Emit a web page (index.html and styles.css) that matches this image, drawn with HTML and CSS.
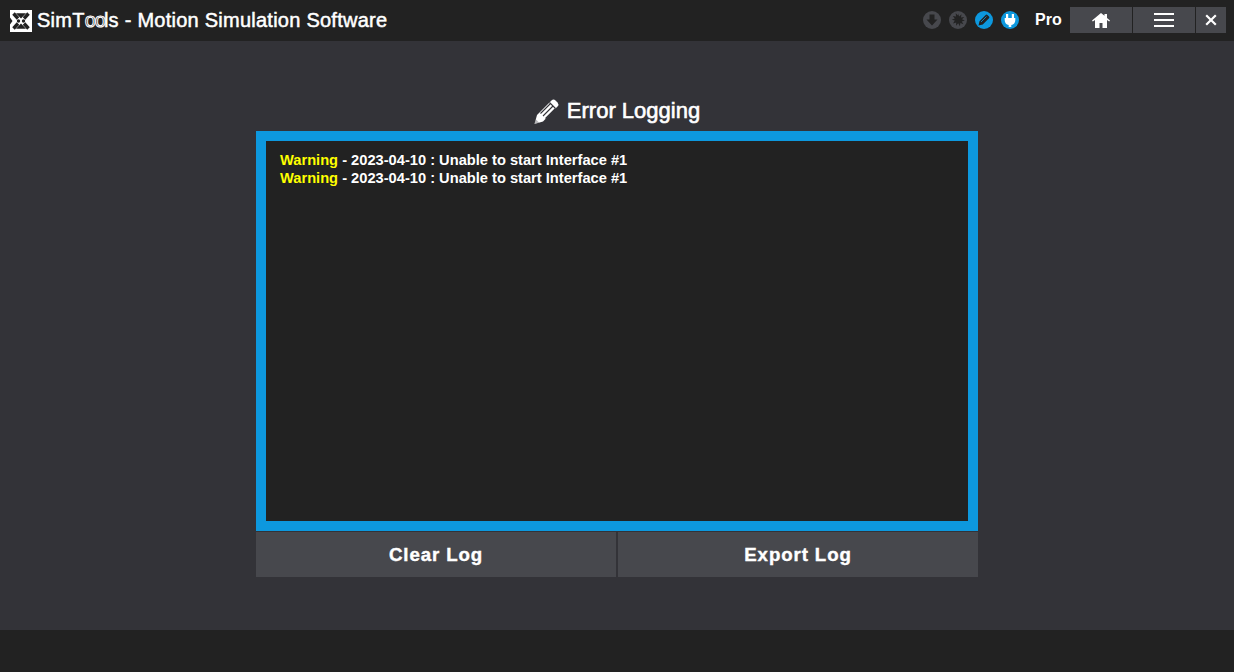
FILE: index.html
```html
<!DOCTYPE html>
<html lang="en">
<head>
<meta charset="utf-8">
<title>SimTools - Motion Simulation Software</title>
<link rel="stylesheet" href="styles.css">
</head>
<body>
<div class="app">
  <header class="topbar">
    <div class="brand">
      <svg class="logo" viewBox="0 0 22 22" width="22" height="22" aria-hidden="true">
        <rect width="22" height="22" fill="#fff"/>
        <path d="M3.500 3.500L8 8.500M18.500 3.500L14 8.500M3.500 18.500L8 13.500M18.500 18.500L14 13.500" stroke="#222" stroke-width="3.400"/>
        <path d="M6 3.200h10L11 8.500zM6 18.800h10L11 13.500z" fill="#222"/>
        <path d="M0 7.500L2.500 11 0 14.500z" fill="#222"/>
        <circle cx="8.500" cy="11" r="1.700" fill="#222"/>
        <circle cx="13.500" cy="11" r="1.700" fill="#222"/>
      </svg>
      <h1 class="brand-title">SimT<span class="gear-letters">oo</span>ls - Motion Simulation Software</h1>
    </div>
    <div class="top-right">
      <div class="status-icons">
        <span class="status status-off">
          <svg viewBox="0 0 18 18" width="18" height="18" aria-hidden="true"><path d="M6.500 3.500h5v5h3L9 14.500 3.500 8.500h3z" fill="#222"/></svg>
        </span>
        <span class="status status-off">
          <svg viewBox="0 0 18 18" width="18" height="18" aria-hidden="true"><path d="M9 2.500l1.200 3 2.300-2.200-.5 3.200 3.300-.6-2.300 2.400 2.800 1.300-3 .8 1.600 2.900-3-1.400-.5 3.300-1.700-2.900-2.200 2.400.2-3.300-3.200 1 1.800-2.800-3-.9 3-1.200-2-2.600 3.200.5-.3-3.200 2.400 2.300z" fill="#222"/></svg>
        </span>
        <span class="status status-on">
          <svg viewBox="0 0 18 18" width="18" height="18" aria-hidden="true"><path d="M3.500 14.500l1-4.300 6.200-6.200a1.200 1.200 0 0 1 1.700 0l1.600 1.600a1.200 1.200 0 0 1 0 1.700l-6.200 6.200z" fill="#222"/><path d="M6 11l5.500-5.500" stroke="#0d98de" stroke-width=".8"/></svg>
        </span>
        <span class="status status-on">
          <svg viewBox="0 0 18 18" width="18" height="18" aria-hidden="true"><path d="M5 3h2.200v4h3.600V3H13v4h1.300v2.300a5.200 5.200 0 0 1-4 4.800V16H7.700v-1.900a5.200 5.200 0 0 1-4-4.800V7H5z" fill="#fff"/></svg>
        </span>
      </div>
      <span class="edition">Pro</span>
      <nav class="top-nav">
        <button class="nav-btn nav-home" aria-label="Home">
          <svg viewBox="0 0 18 15" width="18" height="15" aria-hidden="true"><path d="M9 0L0 7.500l.8 1L3 7v8h4.500v-5h3v5H15V7l2.200 1.500.8-1L15 5V1h-2.500v1.800z" fill="#fff"/></svg>
        </button>
        <button class="nav-btn nav-menu" aria-label="Menu">
          <span class="bars"></span>
        </button>
        <button class="nav-btn nav-close" aria-label="Close">
          <svg viewBox="0 0 12 12" width="12" height="12" aria-hidden="true"><path d="M1.200 1.200L10.800 10.800M10.800 1.200L1.200 10.800" stroke="#fff" stroke-width="2.200"/></svg>
        </button>
      </nav>
    </div>
  </header>
  <main class="content">
    <h2 class="section-title">
      <svg viewBox="0 0 26 26" width="26" height="26" aria-hidden="true">
        <path d="M0.500 26l2.500-9L17.500 2.500a3 3 0 0 1 4 0l2 2a3 3 0 0 1 0 4L9 23.500z" fill="#fff"/>
        <path d="M6.500 15.500L16.500 5.500M9 18L19 8M11.500 20.500L21.500 10.500" stroke="#333338" stroke-width="1.100"/>
        <path d="M15.500 4.500l6 6" stroke="#333338" stroke-width="1.100"/>
        <path d="M0.500 26l1.300-4.700 3.400 3.400z" fill="#333338" opacity=".35"/>
      </svg>
      <span>Error Logging</span>
    </h2>
    <section class="log-panel">
      <div class="log-line"><span class="log-level">Warning</span> - 2023-04-10 : Unable to start Interface #1</div>
      <div class="log-line"><span class="log-level">Warning</span> - 2023-04-10 : Unable to start Interface #1</div>
    </section>
    <div class="log-actions">
      <button class="action-btn">Clear Log</button>
      <button class="action-btn">Export Log</button>
    </div>
  </main>
  <footer class="bottombar"></footer>
</div>
</body>
</html>
```
FILE: styles.css
```css
* { box-sizing: border-box; }
html, body { margin: 0; height: 100%; }
body { font-family: "Liberation Sans", Arial, sans-serif; background: #333338; color: #fff; overflow: hidden; }
.app { height: 672px; display: flex; flex-direction: column; }

.topbar { height: 41px; background: #222222; display: flex; justify-content: space-between; align-items: flex-start; padding: 0 8px 0 10px; }
.brand { display: flex; align-items: center; gap: 5px; height: 41px; }
.logo { flex: none; }
.brand-title { margin: 0; font-size: 20px; font-weight: 400; letter-spacing: 0.25px; -webkit-text-stroke: 0.5px #fff; white-space: nowrap; }
.gear-letters { color: #222; -webkit-text-stroke: 1px #fff; letter-spacing: -1px; margin-right: -1px; }

.top-right { display: flex; align-items: center; padding-top: 7px; }
.status-icons { display: flex; gap: 8px; margin-right: 16px; }
.status { width: 18px; height: 18px; border-radius: 50%; display: block; }
.status svg { display: block; }
.status-off { background: #47484d; }
.status-on { background: #0d98de; }
.edition { font-size: 16px; font-weight: 700; margin-right: 8px; width: 27px; }
.top-nav { display: flex; gap: 1px; }
.nav-btn { height: 26px; border: 0; padding: 0; background: #47484d; display: flex; align-items: center; justify-content: center; }
.nav-home, .nav-menu { width: 62px; }
.nav-close { width: 30px; }
.bars { width: 20px; height: 10px; border-top: 2px solid #fff; border-bottom: 2px solid #fff; display: block; box-sizing: content-box; }
.bars::after { content: ""; display: block; height: 2px; background: #fff; margin-top: 4px; }

.content { flex: 1; display: flex; flex-direction: column; align-items: center; padding-top: 52px; }
.section-title { margin: 0 0 3px; height: 35px; display: flex; align-items: center; gap: 7px; font-size: 22px; font-weight: 400; -webkit-text-stroke: 0.6px #fff; }
.log-panel { width: 722px; height: 400px; border: 10px solid #0d98de; background: #222222; padding: 10px 14px; font-size: 14.67px; font-weight: 700; line-height: 18px; }
.log-level { color: #ffff00; }
.log-actions { width: 722px; margin-top: 1px; display: flex; gap: 2px; }
.action-btn { flex: 1; height: 45px; border: 0; padding: 0; background: #47484d; color: #fff; font-family: inherit; font-size: 18.67px; font-weight: 700; letter-spacing: 0.9px; -webkit-text-stroke: 0.4px #fff; }

.bottombar { height: 42px; background: #222222; }
```
